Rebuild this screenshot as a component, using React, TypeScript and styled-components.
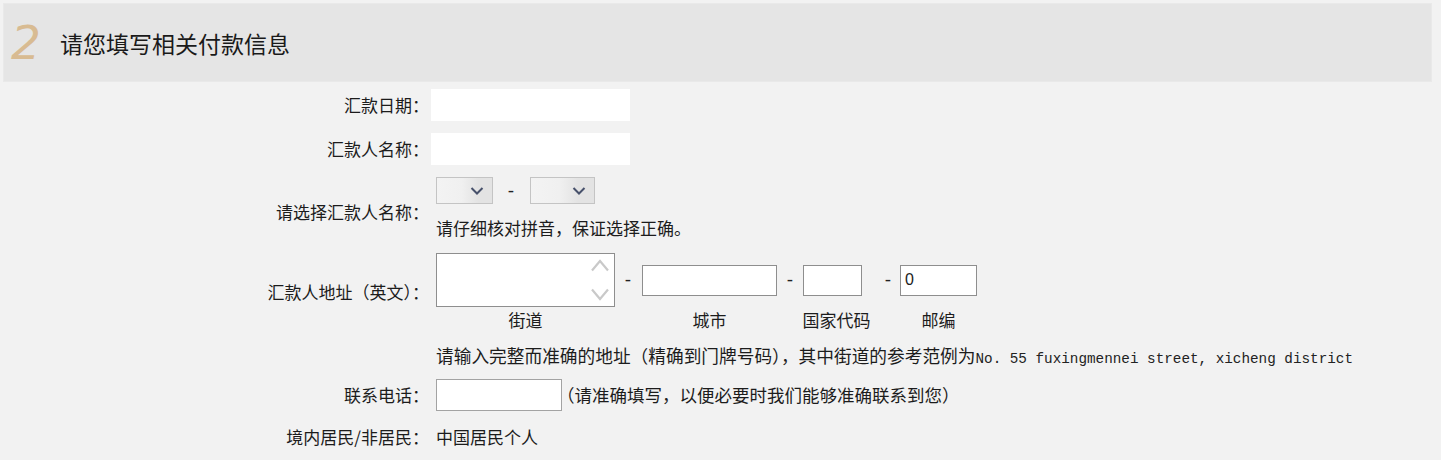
import styled, { createGlobalStyle } from "styled-components";

const GlobalStyle = createGlobalStyle`
  html, body {
    margin: 0;
    padding: 0;
    background: #f2f2f2;
  }
  * {
    box-sizing: border-box;
  }
`;

const cjk = `"Noto Sans CJK SC", "Noto Sans", sans-serif`;

const Page = styled.div`
  width: 1441px;
  height: 460px;
  padding-top: 3px;
  background: #f2f2f2;
  overflow: hidden;
  font-family: ${cjk};
  color: #1c1c1c;
`;

const Header = styled.div`
  display: flex;
  align-items: center;
  height: 79px;
  margin: 0 9px 0 3px;
  padding-left: 8px;
  background: #e5e5e5;
  box-shadow: inset 0 0 0 1px #e9e9e9;
`;

const StepNum = styled.span`
  width: 49px;
  font-family: "DejaVu Sans", sans-serif;
  font-weight: 200;
  font-style: italic;
  font-size: 47px;
  line-height: 1;
  color: #d8bb92;
`;

const Title = styled.h2`
  margin: 0;
  font-size: 23px;
  font-weight: 400;
  line-height: 30px;
  color: #1a1a1a;
`;

const Form = styled.div`
  padding-top: 7px;
`;

const Row = styled.div<{ $top: number }>`
  display: grid;
  grid-template-columns: 429px 1fr;
  column-gap: 2px;
  align-items: center;
  margin-top: ${(p) => p.$top}px;
`;

const Label = styled.div<{ $drop?: number }>`
  text-align: right;
  font-size: 17px;
  line-height: 20px;
  padding-top: ${(p) => p.$drop || 0}px;
  white-space: nowrap;
`;

const Value = styled.div<{ $indent?: number }>`
  display: flex;
  align-items: center;
  padding-left: ${(p) => p.$indent || 0}px;
  font-size: 17px;
  line-height: 20px;
`;

const Stack = styled.div`
  display: flex;
  flex-direction: column;
  align-items: flex-start;
`;

const PlainInput = styled.input`
  width: 199px;
  height: 32px;
  border: none;
  outline: none;
  background: #fff;
  font-size: 16px;
`;

const BoxInput = styled.input<{ $w: number }>`
  width: ${(p) => p.$w}px;
  height: 31px;
  padding: 0 4px;
  border: 1px solid #8e8e8e;
  outline: none;
  background: #fff;
  font-family: "Liberation Sans", sans-serif;
  font-size: 16px;
  color: #222;
`;

const PhoneInput = styled(BoxInput)`
  height: 32px;
  border-color: #a3a3a3;
`;

const SelectLine = styled.div`
  display: flex;
  align-items: center;
  height: 27px;
`;

const SelectBox = styled.div<{ $w: number }>`
  display: flex;
  align-items: center;
  justify-content: flex-end;
  width: ${(p) => p.$w}px;
  height: 27px;
  padding-right: 8px;
  border: 1px solid #c4c4c4;
  background: linear-gradient(to right, #f3f3f3 0%, #f0f0f0 45%, #e3e3e3 75%, #e3e3e3 100%);
`;

const Dash = styled.span<{ $l: number; $r: number }>`
  display: inline-block;
  width: 10px;
  margin: 0 ${(p) => p.$r}px 0 ${(p) => p.$l}px;
  text-align: center;
  font-family: "Liberation Sans", sans-serif;
  font-size: 19px;
  color: #222;
`;

const Hint = styled.div`
  margin-top: 14px;
  font-size: 17px;
  line-height: 20px;
  white-space: nowrap;
`;

const AddressGrid = styled.div`
  display: grid;
  grid-template-columns: 179px auto 135px auto 59px auto 77px;
  grid-template-rows: 54px 20px;
  row-gap: 3px;
  align-items: center;
`;

const TextBox = styled.div`
  display: flex;
  justify-content: flex-end;
  width: 179px;
  height: 54px;
  border: 1px solid #8e8e8e;
  background: #fff;
`;

const ScrollArrows = styled.div`
  display: flex;
  flex-direction: column;
  justify-content: space-between;
  align-items: center;
  width: 26px;
  padding: 4px 2px 4px 0;
`;

const SubLabel = styled.div<{ $col: number; $shift?: number }>`
  grid-row: 2;
  grid-column: ${(p) => p.$col};
  justify-self: center;
  margin-left: ${(p) => p.$shift || 0}px;
  font-size: 17px;
  line-height: 20px;
  white-space: nowrap;
`;

const LongHint = styled.div`
  font-size: 17.7px;
  line-height: 20px;
  white-space: nowrap;
`;

const Latin = styled.span`
  font-family: "Liberation Mono", monospace;
  font-size: 14.3px;
  color: #222;
`;

const Note = styled.span`
  margin-left: -5px;
  font-size: 17.5px;
  white-space: nowrap;
`;

const Chevron = ({ up }: { up?: boolean }) => (
  <svg width="20" height="15" viewBox="0 0 20 15">
    <path
      d={up ? "M2 12.5 L10 3 L18 12.5" : "M2 2.5 L10 12 L18 2.5"}
      fill="none"
      stroke="#c9c9c9"
      strokeWidth="2.2"
    />
  </svg>
);

const Caret = () => (
  <svg width="14" height="8" viewBox="0 0 14 8">
    <path d="M1.5 1 L7 6.5 L12.5 1" fill="none" stroke="#47516b" strokeWidth="2" />
  </svg>
);

export default function App() {
  return (
    <>
      <GlobalStyle />
      <Page>
        <Header>
          <StepNum>2</StepNum>
          <Title>请您填写相关付款信息</Title>
        </Header>
        <Form>
          <Row $top={0}>
            <Label>汇款日期：</Label>
            <Value>
              <PlainInput />
            </Value>
          </Row>
          <Row $top={12}>
            <Label>汇款人名称：</Label>
            <Value>
              <PlainInput />
            </Value>
          </Row>
          <Row $top={12}>
            <Label $drop={8}>请选择汇款人名称：</Label>
            <Value $indent={5}>
              <Stack>
                <SelectLine>
                  <SelectBox $w={57}>
                    <Caret />
                  </SelectBox>
                  <Dash $l={13} $r={14}>-</Dash>
                  <SelectBox $w={65}>
                    <Caret />
                  </SelectBox>
                </SelectLine>
                <Hint>请仔细核对拼音，保证选择正确。</Hint>
              </Stack>
            </Value>
          </Row>
          <Row $top={15}>
            <Label>汇款人地址（英文）：</Label>
            <Value $indent={5}>
              <AddressGrid>
                <TextBox>
                  <ScrollArrows>
                    <Chevron up />
                    <Chevron />
                  </ScrollArrows>
                </TextBox>
                <Dash $l={8} $r={9}>-</Dash>
                <BoxInput $w={135} />
                <Dash $l={8} $r={8}>-</Dash>
                <BoxInput $w={59} />
                <Dash $l={21} $r={7}>-</Dash>
                <BoxInput $w={77} defaultValue="0" />
                <SubLabel $col={1}>街道</SubLabel>
                <SubLabel $col={3}>城市</SubLabel>
                <SubLabel $col={5} $shift={8}>国家代码</SubLabel>
                <SubLabel $col={7}>邮编</SubLabel>
              </AddressGrid>
            </Value>
          </Row>
          <Row $top={15}>
            <Label />
            <Value $indent={5}>
              <LongHint>
                请输入完整而准确的地址（精确到门牌号码），其中街道的参考范例为
                <Latin>No. 55 fuxingmennei street, xicheng district</Latin>
              </LongHint>
            </Value>
          </Row>
          <Row $top={10}>
            <Label>联系电话：</Label>
            <Value $indent={5}>
              <PhoneInput $w={126} />
              <Note>（请准确填写，以便必要时我们能够准确联系到您）</Note>
            </Value>
          </Row>
          <Row $top={16}>
            <Label>境内居民/非居民：</Label>
            <Value $indent={5}>中国居民个人</Value>
          </Row>
        </Form>
      </Page>
    </>
  );
}
